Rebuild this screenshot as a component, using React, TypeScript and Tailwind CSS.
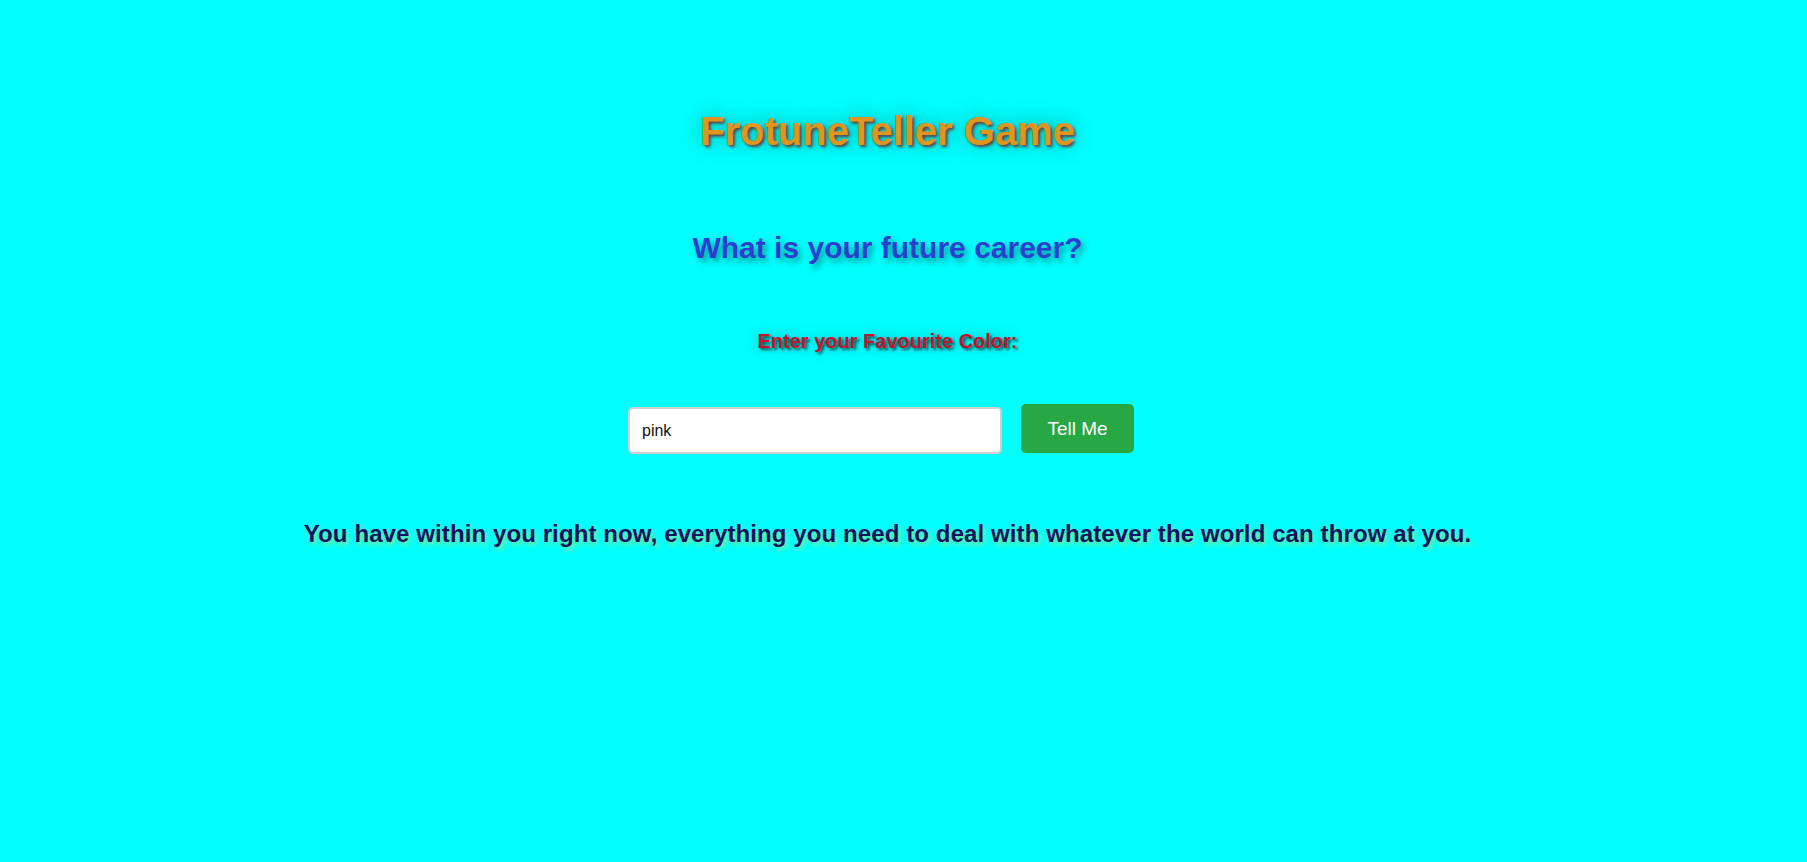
import React, { useState } from "react";

export default function App() {
  const [color, setColor] = useState("pink");
  return (
    <div className="min-h-[862px] w-full bg-[#00ffff] font-['Liberation_Sans',Arial,sans-serif]">
      <div className="flex flex-col items-center pt-[108px] pr-[32px]">
        <h1 className="text-[40px] leading-[46px] font-bold text-[#e0951f] [text-shadow:2px_2px_3px_rgba(110,30,30,0.85),0_0_22px_rgba(0,0,0,0.4)]">
          FrotuneTeller Game
        </h1>
        <h2 className="mt-[77px] text-[30px] leading-[34px] font-bold text-[#2c3ecf] [text-shadow:3px_4px_6px_rgba(0,0,0,0.4)]">
          What is your future career?
        </h2>
        <label className="mt-[65px] text-[20px] leading-[23px] font-bold text-[#c8102e] [text-shadow:2px_2px_3px_rgba(0,0,0,0.7),0_0_16px_rgba(0,0,0,0.3)]">
          Enter your Favourite Color:
        </label>
        <div className="mt-[51px] flex items-start gap-[19px] pr-[13px]">
          <input
            value={color}
            onChange={(e) => setColor(e.target.value)}
            className="mt-[3px] h-[47px] w-[374px] rounded-[5px] border-2 border-solid border-[#cfcfcf] bg-white px-[12px] text-[16px] text-[#111] outline-none font-['Liberation_Sans',Arial,sans-serif]"
          />
          <button className="h-[49px] w-[113px] rounded-[5px] bg-[#28a745] pt-[1px] text-[19px] text-white font-['Liberation_Sans',Arial,sans-serif]">
            Tell Me
          </button>
        </div>
        <p className="mt-[66px] text-[24px] leading-[28px] font-bold tracking-[0.1px] text-[#14125e] [text-shadow:2px_3px_5px_rgba(220,220,60,0.6)]">
          You have within you right now, everything you need to deal with whatever the world can throw at you.
        </p>
      </div>
    </div>
  );
}
